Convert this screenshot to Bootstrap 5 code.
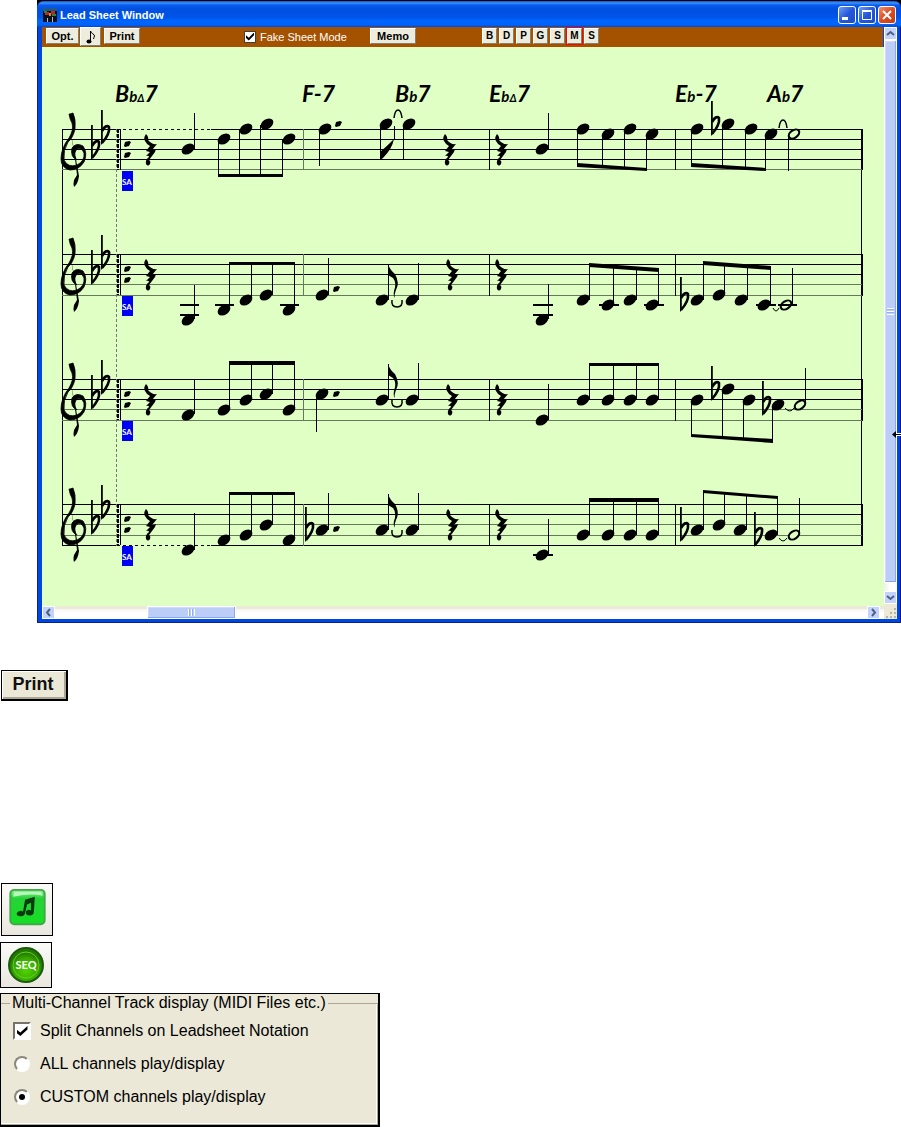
<!DOCTYPE html>
<html lang="en">
<head>
<meta charset="utf-8">
<meta name="viewport" content="width=device-width, initial-scale=1">
<title>Lead Sheet Window</title>
<link href="https://cdn.jsdelivr.net/npm/bootstrap@5.3.0/dist/css/bootstrap.min.css" rel="stylesheet">
<style>
body{font-family:"Liberation Sans",Arial,sans-serif;background:#fff;color:#000}
.win{margin-left:37px;background:#000;padding-top:1px}
.win-body{background:#0046e0;border-radius:7px 7px 0 0;overflow:hidden;padding:0 4px 4px 5px;box-shadow:inset 1px -1px 0 #0a2480,inset -1px 0 0 #00138c}
.titlebar{height:26px;margin:0 -4px 0 -5px;padding:2px 5px 0 6px;background:linear-gradient(#0a50c8 0,#3c96ff 2px,#0a5cf0 4px,#0050e0 8px,#0054e8 16px,#0066ff 20px,#0062fa 24px,#0048d0 26px)}
.titlebar h1{font-size:11px;line-height:16px;font-weight:bold;color:#fff;margin:0 0 0 3px}
.caps{gap:2px}
.cap{width:18px;height:18px;padding:0;border:1px solid #fff;border-radius:3px;background:linear-gradient(135deg,#6f9cf5,#2458dc 50%,#1c4cc8);line-height:0}
.cap.shut{background:linear-gradient(135deg,#f0906c,#dc4c24 50%,#c03c14)}
.cap svg{width:16px;height:16px}
.toolbar{height:20px;background:#a55200;padding:1px 0 0 4px;margin-right:1px}
.bev{height:16px;padding:0;font-size:11px;line-height:12px;font-weight:bold;color:#000;background:#eeeddd;border:1px solid;border-color:#fff #848070 #848070 #fff;border-radius:0}
.bev.opt{width:33px}.bev.note{width:21px;height:19px;margin:-1px 3px 0 1px;line-height:0}.bev.prt{width:36px}
.bev.memo{width:46px}.bev.ltr{width:15px;font-size:10px}
.bev.hot{outline:1px solid #f00}
.fake{margin-left:104px;margin-right:21px;height:17px;width:105px}
.fake label{font-size:11px;line-height:16px;color:#fff}
.tick{appearance:none;margin:0;width:12px;height:12px;background:#fff;border:1px solid #404040;display:grid;place-items:center;flex:none}
.tick::after{content:"";width:8px;height:8px;background:#000;clip-path:polygon(0 35%,35% 65%,100% 0,100% 35%,35% 100%,0 70%)}
.letters{margin-left:66px;gap:2px}
.score{display:block;width:100%;height:auto;background:#dfffc5}
.thumb{background:#bccdf8;border:1px solid #fff;box-shadow:inset -1px -1px 0 #8ca8e8,inset 1px 1px 0 #cfdcff}
.arrow{padding:0;line-height:0;border:1px solid #fff;background:#c3d3fb;width:13px;height:13px;flex:none;display:grid;place-items:center}
.arrow svg{width:9px;height:9px}
.hbar{height:13px;background:linear-gradient(#ece9d8 3px,#f6f5f0 3px,#fff 7px)}
.vcol{width:13px;flex:none;background:linear-gradient(90deg,#eef0e8,#fff 6px)}
.hbar .thumb{width:89px;margin-left:92px}
.grip{width:7px;height:7px}
.grip.h{background:repeating-linear-gradient(90deg,#fff 0 1px,#8eb0f4 1px 2px,transparent 2px 3px)}
.grip.v{background:repeating-linear-gradient(#fff 0 1px,#8eb0f4 1px 2px,transparent 2px 3px)}
.corner{height:15px;background:#ece9d8;line-height:0}
.pointer{position:absolute;width:10px;height:9px;right:-5px;top:68%}
.ink{fill:none;stroke:#000;stroke-width:1}
.faint{fill:none;stroke:#66785a;stroke-width:1}
.chord{font:italic bold 23px Lato,"Liberation Sans",sans-serif}
.chord .sub{font-size:15px}
.chord .tri{font-size:11px}
.sec{font:bold 8px Lato,"Liberation Sans",sans-serif;fill:#fff}
.bigprint{margin:47px 0 0 1px;width:67px;height:31px;padding:0 2px 3px 0;display:block;border:2px solid #000;border-width:1px 2px 2px 1px;border-radius:0;background:#ebe8d8;box-shadow:inset 1px 1px 0 #fff,inset -2px -2px 0 #aaa594;font-weight:bold;font-size:18px;line-height:24px;color:#111}
.tile{display:block;padding:0;border:1px solid #000;background:linear-gradient(#fafaf7,#e9e7de);border-radius:0;line-height:0}
.tile svg{width:100%;height:100%}
.tile.notes{width:52px;height:53px;margin:182px 0 6px 1px}
.tile.seq{width:52px;height:46px;margin-bottom:5px}
.seqtext{font:bold 11px Lato,"Liberation Sans",sans-serif;fill:#fff}
.options{width:380px;height:134px;border:2px solid #000;border-width:1px 2px 2px 1px;background:#ebe8d8;overflow:hidden}
.options fieldset{height:131px;border:1px solid #aca899;border-left:0;box-shadow:inset -1px -1px 0 #fff;padding:0 12px;min-width:0}
.options legend{float:none;width:auto;margin:0 0 8px -3px;padding:0 2px;font-size:16px;line-height:18px;background:#ebe8d8}
.options label{font-size:16px;line-height:22px}
.pick{gap:9px;height:22px;margin-bottom:11px}
.pick .tick{width:18px;height:18px;border:2px solid;border-color:#77736a #fff #fff #77736a}
.pick .tick::after{width:11px;height:10px}
.dial{appearance:none;margin:0 1px;width:16px;height:16px;border-radius:50%;background:#fff;border:2px solid;border-color:#8b877b #fff #fff #8b877b;display:grid;place-items:center;flex:none}
.dial:checked::after{content:"";width:6px;height:6px;border-radius:50%;background:#000}
</style>
</head>
<body>
<main>
<section class="win" aria-label="Lead Sheet Window">
<div class="win-body">
<header class="titlebar d-flex align-items-center">
<svg width="14" height="14" viewBox="0 0 14 14" aria-hidden="true"><path fill="#07101c" d="M0 0h14v14H0z"/><path fill="#1b5a8a" d="M0 0h14v3H0z"/><path fill="#c2261c" d="M2 4h4v3H2zM8 3h4v3H8z"/><path fill="#26863c" d="M1 3h3v2H1zM9 6h4v2H9z"/><path fill="#dc8a28" d="M6 5h2v3H6z"/><path fill="#b5b8bd" d="M4 10h1v4H4zM9 9h1v5H9z"/></svg>
<h1>Lead Sheet Window</h1>
<div class="caps ms-auto d-flex">
<button class="cap" aria-label="Minimize"><svg viewBox="0 0 16 16"><path fill="#fff" d="M3 10h6v3H3z"/></svg></button>
<button class="cap" aria-label="Maximize"><svg viewBox="0 0 16 16"><path fill="none" stroke="#fff" d="M3.500 4.500h9v8h-9zM3 3.500h10"/></svg></button>
<button class="cap shut" aria-label="Close"><svg viewBox="0 0 16 16"><path stroke="#fff" stroke-width="2" d="M4 4l8 8M12 4l-8 8"/></svg></button>
</div>
</header>
<div class="d-flex">
<div class="flex-grow-1 overflow-hidden">
<div class="toolbar d-flex align-items-start">
<button class="bev opt">Opt.</button>
<button class="bev note" aria-label="Notation"><svg width="17" height="17" viewBox="0 0 17 17"><ellipse cx="7" cy="13.500" rx="2.500" ry="2"/><path fill="none" stroke="#000" d="M8.500 13V3c1 3 4 3 4 5 0 1-1 2-1 3"/></svg></button>
<button class="bev prt">Print</button>
<div class="fake d-flex align-items-center"><input type="checkbox" class="tick" id="fake" checked><label for="fake" class="ms-1 text-nowrap">Fake Sheet Mode</label></div>
<button class="bev memo">Memo</button>
<div class="letters d-flex"><button class="bev ltr">B</button><button class="bev ltr">D</button><button class="bev ltr">P</button><button class="bev ltr">G</button><button class="bev ltr">S</button><button class="bev ltr hot">M</button><button class="bev ltr">S</button></div>
</div>
<svg class="score" viewBox="42 47 842 559" role="img" aria-label="Four staves of music">
<defs>
<ellipse id="n" rx="7" ry="4.800" transform="rotate(-35)"/>
<ellipse id="h" rx="5.800" ry="3.700" transform="rotate(-35)" fill="#dfffc5" stroke="#000" stroke-width="2.200"/>
<path id="d" d="M-3 2L-2-2L2-3L4-2L2 2L-2 3z"/>
<path id="r" d="M-4-16Q-7-12-5-9Q-3-5 0-4L-4 1L0 2L-4 6Q-1 5-1 7Q-5 10-4 14Q-2 17 0 14Q1 11-1 10L5 2L6-1L2 0L7-6Q2-5-2-10Q-1-13-4-16z"/>
<g id="f"><path d="M0 0h1.800v33L0 35z"/><path fill="none" stroke="#000" stroke-width="2.600" d="M1 21Q5 14 8 17Q9 24 1 33"/></g>
<g id="clef"><path stroke="#000" stroke-width=".8" d="M70 114l3-1q3 6 2 16-2 9-7 13-5 8-4 18 4 8 13 5 8-4 7-12-3-7-8-3-3 6 1 10-7-3-5-12 4-6 11-2 5 7 1 16-5 8-14 8-9-2-9-11 0-11 8-21 5-8 3-15-2-3-3-9z"/><path d="M70 130q5 22 9 46-1 8-5 11-1-3 0-7l3-5q-2-22-7-45z"/></g>
<path id="flag" d="M0 0q2 6 7 10 5 9 1 16-2 5-1 8-2-2-1-7 3-8-1-13l-5-3z"/>
<path id="tie" d="M0 0q-1 7 5 7t5-7" fill="none" stroke="#000" stroke-width="1.500"/>
<g id="start"><use href="#clef"/><use href="#f" x="91" y="125"/><use href="#f" x="101" y="110"/><path stroke="#000" stroke-width="2" stroke-dasharray="4 1" d="M118 129v41"/><path class="ink" d="M120.500 129v41"/><use href="#d" x="127" y="144"/><use href="#d" x="127" y="155"/><path fill="#0000f4" d="M122 171h11v20h-11z"/><text class="sec" x="127" y="185" text-anchor="middle">SA</text><use href="#r" x="150" y="150"/></g>
</defs>
<path class="ink" d="M62 129.500H862M62 139.500H862M62 149.500H862M62 159.500H862M62 254.500H862M62 264.500H862M62 274.500H862M62 379.500H862M62 389.500H862M62 399.500H862M62 504.500H862M62 514.500H862M62 545.500H862M62.500 129V546M861.500 129V546"/>
<path class="faint" d="M62 169.500H862M62 284.500H862M62 295.500H862M62 409.500H862M62 420.500H862M62 524.500H862M62 535.500H862M303.500 129V170M303.500 254V296M303.500 379V421M303.500 504V546"/>
<path class="ink" d="M489.500 129V170M489.500 254V296M489.500 379V421M489.500 504V546M675.500 129V170M675.500 254V296M675.500 379V421M675.500 504V546M862.500 129V170M862.500 254V296M862.500 379V421M862.500 504V546"/>
<path stroke="#dfffc5" stroke-dasharray="3 3" d="M120 129.500H211M120 545.500H211"/>
<path stroke="#777" stroke-dasharray="3 2" d="M116.500 129V546"/>
<use href="#start"/><use href="#start" y="125"/><use href="#start" y="250"/><use href="#start" y="375"/>
<text class="chord" x="115" y="102">B<tspan class="sub">b</tspan><tspan class="tri">Δ</tspan>7</text>
<text class="chord" x="302" y="102">F-7</text>
<text class="chord" x="395" y="102">B<tspan class="sub">b</tspan>7</text>
<text class="chord" x="489" y="102">E<tspan class="sub">b</tspan><tspan class="tri">Δ</tspan>7</text>
<text class="chord" x="675" y="102">E<tspan class="sub">b</tspan>-7</text>
<text class="chord" x="767" y="102">A<tspan class="sub">b</tspan>7</text>
<!-- staff 1 -->
<path class="ink" d="M194.500 113V149M218.500 140V176M239.500 130V176M260.500 125V176M282.500 140V176M319.500 130V166M380.500 125V160M403.500 125V160M548.500 113V149M577.500 130V165M602.500 135V167M624.500 130V168M646.500 135V171M691.500 130V165M722.500 125V168M745.500 130V169M765.500 135V171M788.500 134V171"/>
<path d="M218 174h65v3h-65zM577 163l70 5v3l-70-4zM691 163l75 5v3l-75-4zM380 160v-8q6-5 14-13-2 10-11 19zM394 126h1v14h-1z"/>
<use href="#n" x="188" y="149"/><use href="#n" x="224" y="139"/><use href="#n" x="246" y="129"/><use href="#n" x="267" y="124"/><use href="#n" x="289" y="139"/><use href="#n" x="325" y="129"/><use href="#d" x="338" y="124"/><use href="#n" x="386" y="124"/><use href="#n" x="409" y="124"/><use href="#r" x="449" y="150"/><use href="#r" x="501" y="150"/><use href="#n" x="542" y="149"/><use href="#n" x="583" y="129"/><use href="#n" x="608" y="134"/><use href="#n" x="630" y="129"/><use href="#n" x="652" y="134"/><use href="#n" x="697" y="129"/><use href="#f" x="711" y="101"/><use href="#n" x="728" y="124"/><use href="#n" x="751" y="129"/><use href="#n" x="771" y="134"/><use href="#h" x="794" y="134"/>
<path fill="none" stroke="#000" stroke-width="1.500" d="M394 118q1-8 4-8t4 8M779 128q1-8 4-8t4 8"/>
<!-- staff 2 -->
<path class="ink" d="M194.500 285V319M229.500 262V309M251.500 262V300M272.500 262V295M294.500 262V309M328.500 258V295M388.500 264V300M418.500 263V300M548.500 284V319M589.500 265V300M613.500 266V305M636.500 268V300M658.500 269V305M703.500 262V300M724.500 264V295M747.500 265V300M770.500 267V305M792.500 268V305"/>
<path d="M229 262h66v3h-66zM589 263l70 5v4l-70-5zM703 261l68 5v4l-68-5zM180 304h19v2h-19zM180 314h19v2h-19zM215 304h19v2h-19zM280 304h19v2h-19zM533 304h20v2h-20zM533 314h20v2h-20zM599 304h20v2h-20zM644 304h20v2h-20zM756 304h20v2h-20z"/>
<use href="#n" x="188" y="320"/><use href="#n" x="224" y="310"/><use href="#n" x="246" y="300"/><use href="#n" x="266" y="295"/><use href="#n" x="289" y="310"/><use href="#n" x="322" y="295"/><use href="#d" x="336" y="289"/><use href="#n" x="382" y="300"/><use href="#flag" x="388" y="264"/><use href="#tie" x="392" y="300"/><use href="#n" x="412" y="300"/><use href="#r" x="452" y="275"/><use href="#r" x="501" y="275"/><use href="#n" x="542" y="320"/><use href="#n" x="583" y="300"/><use href="#n" x="608" y="305"/><use href="#n" x="630" y="300"/><use href="#n" x="652" y="305"/><use href="#f" x="680" y="277"/><use href="#n" x="697" y="300"/><use href="#n" x="719" y="295"/><use href="#n" x="741" y="300"/><use href="#n" x="764" y="305"/><use href="#h" x="786" y="305"/><path d="M778 304h19v2h-19z"/>
<path class="ink" d="M773 308q3 6 6 0"/>
<!-- staff 3 -->
<path class="ink" d="M194.500 379V414M229.500 361V410M251.500 361V400M272.500 361V394M294.500 361V410M316.500 394V432M388.500 364V400M418.500 363V400M548.500 384V420M589.500 363V400M613.500 363V400M636.500 363V400M658.500 363V400M691.500 400V437M722.500 389V438M743.500 399V439M772.500 405V442M805.500 368V405"/>
<path d="M229 361h66v4h-66zM589 363h70v3h-70zM691 434l82 5v4l-82-6z"/>
<use href="#n" x="188" y="415"/><use href="#n" x="224" y="410"/><use href="#n" x="246" y="400"/><use href="#n" x="266" y="394"/><use href="#n" x="289" y="410"/><use href="#n" x="322" y="394"/><use href="#d" x="336" y="394"/><use href="#n" x="382" y="400"/><use href="#flag" x="388" y="364"/><use href="#tie" x="392" y="400"/><use href="#n" x="412" y="400"/><use href="#r" x="452" y="400"/><use href="#r" x="501" y="400"/><use href="#n" x="542" y="420"/><use href="#n" x="583" y="400"/><use href="#n" x="608" y="400"/><use href="#n" x="630" y="400"/><use href="#n" x="652" y="400"/><use href="#n" x="697" y="400"/><use href="#f" x="711" y="366"/><use href="#n" x="728" y="389"/><use href="#n" x="749" y="400"/><use href="#f" x="762" y="381"/><use href="#n" x="778" y="405"/><use href="#h" x="800" y="405"/>
<path class="ink" d="M785 408q5 6 9 0"/>
<!-- staff 4 -->
<path class="ink" d="M194.500 513V550M229.500 492V540M251.500 492V535M272.500 492V525M294.500 492V540M328.500 493V530M388.500 494V530M418.500 493V530M548.500 519V555M589.500 498V535M613.500 498V535M636.500 498V535M658.500 498V535M703.500 491V530M724.500 493V525M746.500 494V530M777.500 496V535M799.500 498V535"/>
<path d="M229 492h66v3h-66zM589 498h70v4h-70zM703 490l75 6v3l-75-6zM533 554h20v2h-20z"/>
<use href="#n" x="188" y="550"/><use href="#n" x="224" y="540"/><use href="#n" x="246" y="535"/><use href="#n" x="266" y="525"/><use href="#n" x="289" y="540"/><use href="#f" x="305" y="507"/><use href="#n" x="322" y="530"/><use href="#d" x="336" y="529"/><use href="#n" x="382" y="530"/><use href="#flag" x="388" y="494"/><use href="#tie" x="392" y="530"/><use href="#n" x="412" y="530"/><use href="#r" x="452" y="525"/><use href="#r" x="501" y="525"/><use href="#n" x="542" y="555"/><use href="#n" x="583" y="535"/><use href="#n" x="608" y="535"/><use href="#n" x="630" y="535"/><use href="#n" x="652" y="535"/><use href="#f" x="680" y="507"/><use href="#n" x="697" y="530"/><use href="#n" x="719" y="525"/><use href="#n" x="740" y="530"/><use href="#f" x="754" y="512"/><use href="#n" x="771" y="535"/><use href="#h" x="794" y="535"/>
<path class="ink" d="M779 538q4 6 8 0"/>
</svg>
<div class="hbar d-flex">
<button class="arrow" aria-label="Scroll left"><svg viewBox="0 0 9 9"><path fill="none" stroke="#4d6185" stroke-width="2" d="M6 1L3 4.500 6 8"/></svg></button>
<div class="thumb d-flex align-items-center justify-content-center"><span class="grip h"></span></div>
<button class="arrow ms-auto me-1" aria-label="Scroll right"><svg viewBox="0 0 9 9"><path fill="none" stroke="#4d6185" stroke-width="2" d="M3 1l3 3.500L3 8"/></svg></button>
</div>
</div>
<div class="vcol d-flex flex-column position-relative">
<button class="arrow" aria-label="Scroll up"><svg viewBox="0 0 9 9"><path fill="none" stroke="#4d6185" stroke-width="2" d="M1 6l3.500-3L8 6"/></svg></button>
<div class="thumb flex-grow-1 d-flex align-items-center justify-content-center mb-2"><span class="grip v"></span></div>
<button class="arrow" aria-label="Scroll down"><svg viewBox="0 0 9 9"><path fill="none" stroke="#4d6185" stroke-width="2" d="M1 3l3.500 3L8 3"/></svg></button>
<div class="corner"><svg width="13" height="15" viewBox="0 0 13 15"><path fill="#b8b4a2" d="M10 4h2v2h-2zM10 8h2v2h-2zM6 8h2v2H6zM10 12h2v2h-2zM6 12h2v2H6zM2 12h2v2H2z"/></svg></div>
<svg class="pointer" viewBox="0 0 10 9" aria-hidden="true"><path stroke="#fff" stroke-width="3" d="M1 4.500h9"/><path d="M0 4.500L4 1v3h6v1H4v3z"/></svg>
</div>
</div>
</div>
</section>
<button class="bigprint">Print</button>
<button class="tile notes" aria-label="Notation window"><svg viewBox="0 0 50 52"><defs><linearGradient id="g1" x2="0" y2="1"><stop stop-color="#8af08e"/><stop offset=".25" stop-color="#27d238"/><stop offset="1" stop-color="#14e022"/></linearGradient></defs><rect x="8" y="6" width="35" height="35" rx="4" fill="url(#g1)" stroke="#43a64c" stroke-width="2"/><path fill="#b8f7ba" d="M12 8h27q2 1 2 4-12-3-30 1 0-4 1-5z"/><path fill="#0a3a10" d="M23 16l10-3-1 15q0 4-4 4-5 0-4-4 2-3 5-1v-8l-4 2-2 9q-1 3-5 3-5-1-3-4 3-3 6-1z"/></svg></button>
<button class="tile seq"><svg viewBox="0 0 50 44"><defs><radialGradient id="g2" cy=".65"><stop stop-color="#4fd600"/><stop offset=".7" stop-color="#38a800"/><stop offset="1" stop-color="#237a00"/></radialGradient></defs><circle cx="25" cy="22" r="17" fill="url(#g2)" stroke="#1d5a10" stroke-width="2"/><circle cx="25" cy="22" r="13" fill="none" stroke="#61cf28"/><text class="seqtext" x="25" y="26" text-anchor="middle">SEQ</text></svg></button>
<div class="options">
<fieldset>
<legend>Multi-Channel Track display (MIDI Files etc.)</legend>
<div class="pick d-flex align-items-center"><input type="checkbox" class="tick" id="split" checked><label for="split">Split Channels on Leadsheet Notation</label></div>
<div class="pick d-flex align-items-center"><input type="radio" class="dial" name="ch" id="all"><label for="all">ALL channels play/display</label></div>
<div class="pick d-flex align-items-center"><input type="radio" class="dial" name="ch" id="custom" checked><label for="custom">CUSTOM channels play/display</label></div>
</fieldset>
</div>
</main>
<script src="https://cdn.jsdelivr.net/npm/bootstrap@5.3.0/dist/js/bootstrap.bundle.min.js"></script>
</body>
</html>
